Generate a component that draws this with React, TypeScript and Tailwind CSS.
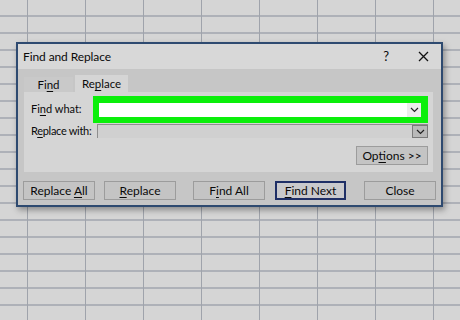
import React from "react";

const U = ({ children }: { children: React.ReactNode }) => (
  <span className="underline underline-offset-[2px] decoration-[1px]">{children}</span>
);

const Chevron = ({ className = "" }: { className?: string }) => (
  <svg width="9" height="6" viewBox="0 0 9 6" className={className}>
    <path d="M1 1 L4.5 4.5 L8 1" fill="none" stroke="#222" strokeWidth="1.2" />
  </svg>
);

function Btn({ children, w, ml, active }: { children: React.ReactNode; w: string; ml: string; active?: boolean }) {
  return (
    <div
      className={`${w} ${ml} h-[19px] shrink-0 flex items-center justify-center text-[12px] text-[#0a0a0a] whitespace-nowrap ${
        active
          ? "bg-[#c9c9cc] border-2 border-[#1f2f66]"
          : "bg-[#c4c4c4] border border-[#9c9c9c]"
      }`}
    >
      <span>{children}</span>
    </div>
  );
}

export default function App() {
  return (
    <div className="relative w-[460px] h-[320px] overflow-hidden bg-[#d5d5d5] font-['Lato','Noto_Sans',sans-serif]">
      <div className="absolute inset-0 bg-[linear-gradient(to_right,#9fa3ab_1px,transparent_1px),linear-gradient(to_bottom,#aeb1b8_2px,transparent_2px)] bg-[length:58px_17px,58px_17px] bg-[position:27px_0px,0px_15px]" />
      <div className="absolute left-[16px] top-[42px] w-[427px] h-[165px] border-2 border-[#2e4a70] bg-[#c6c6c6] flex flex-col shadow-[2px_3px_6px_rgba(0,0,0,0.35)]">
        {/* title bar */}
        <div className="h-[25px] bg-[#d8d8d8] flex items-center pl-[5px] pr-[12px] text-[12px] tracking-[-0.1px] text-[#0a0a0a]">
          <span>Find and Replace</span>
          <span className="ml-auto text-[13px] mr-[29px]">?</span>
          <svg width="11" height="11" viewBox="0 0 11 11">
            <path d="M1 1 L10 10 M10 1 L1 10" stroke="#111" strokeWidth="1.3" />
          </svg>
        </div>
        {/* body */}
        <div className="flex-1 flex flex-col pl-[6px] pr-[5px] pt-[6px]">
          <div className="flex items-end h-[17px]">
            <div className="w-[49px] h-[15px] bg-[#c9c9c9] flex items-center justify-center text-[11.5px] text-[#0a0a0a]">
              <span>Fi<U>n</U>d</span>
            </div>
            <div className="ml-[2px] w-[53px] h-[17px] bg-[#d5d5d5] flex items-center justify-center text-[11.5px] text-[#0a0a0a]">
              <span>Re<U>p</U>lace</span>
            </div>
          </div>
          <div className="w-[409px] h-[80px] bg-[#d5d5d5] flex flex-col pl-[7px] pr-[5px] pt-[4px]">
            <div className="flex items-center h-[27px]">
              <div className="w-[62px] shrink-0 text-[11px] text-[#0a0a0a] whitespace-nowrap">
                Fi<U>n</U>d what:
              </div>
              <div className="flex-1 h-[27px] bg-[#0aef0a] pl-[6px] pr-[7px] pt-[7px] pb-[6px]">
                <div className="h-full bg-white flex justify-end">
                  <div className="w-[14px] h-full bg-[#ececec] flex items-center justify-center">
                    <Chevron />
                  </div>
                </div>
              </div>
            </div>
            <div className="flex items-center h-[14px] mt-[1px]">
              <div className="w-[66px] shrink-0 text-[11px] tracking-[-0.3px] text-[#0a0a0a] whitespace-nowrap">
                R<U>e</U>place with:
              </div>
              <div className="w-[331px] shrink-0 h-[14px] bg-[#d0d0d0] border-t border-l border-[#8e8e8e] flex justify-end">
                <div className="w-[16px] h-full bg-[#b9b9b9] border border-[#7a7a7a] flex items-center justify-center">
                  <Chevron />
                </div>
              </div>
            </div>
            <div className="flex justify-end mt-[8px]">
              <div className="w-[72px] h-[19px] bg-[#c4c4c4] border border-[#9c9c9c] flex items-center justify-center text-[12px] text-[#0a0a0a] whitespace-nowrap">
                <span>Op<U>t</U>ions &gt;&gt;</span>
              </div>
            </div>
          </div>
          <div className="flex mt-[9px]">
            <Btn w="w-[72px]" ml="ml-[-1px]">
              Replace <U>A</U>ll
            </Btn>
            <Btn w="w-[72px]" ml="ml-[9px]">
              <U>R</U>eplace
            </Btn>
            <Btn w="w-[72px]" ml="ml-[17px]">
              F<U>i</U>nd All
            </Btn>
            <Btn w="w-[71px]" ml="ml-[10px]" active>
              <U>F</U>ind Next
            </Btn>
            <Btn w="w-[72px]" ml="ml-[18px]">
              Close
            </Btn>
          </div>
        </div>
      </div>
    </div>
  );
}
